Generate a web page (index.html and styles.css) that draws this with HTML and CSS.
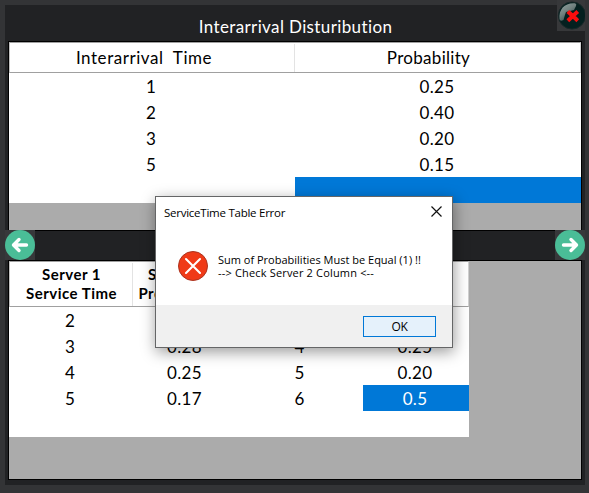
FILE: index.html
```html
<!DOCTYPE html>
<html lang="en">
<head>
<meta charset="utf-8">
<title>Interarrival Disturibution</title>
<link rel="stylesheet" href="styles.css">
</head>
<body>
<main class="panel">
  <h1 class="title"><span>Interarrival Disturibution</span></h1>
  <section class="grid arrivals">
    <div class="head"><span class="h-time">Interarrival&nbsp; Time</span></div><div class="head last"><span class="h-prob">Probability</span></div>
    <div class="cell">1</div><div class="cell">0.25</div>
    <div class="cell">2</div><div class="cell">0.40</div>
    <div class="cell">3</div><div class="cell">0.20</div>
    <div class="cell">5</div><div class="cell">0.15</div>
    <div class="cell"></div><div class="cell selected"></div>
  </section>
  <nav class="nav">
    <svg class="arrow" viewBox="0 0 30 30"><circle cx="15" cy="15" r="15" fill="#4abd97"/><path d="M8.500 15H21.500M14 9.500L8.500 15L14 20.500" fill="none" stroke="#fff" stroke-width="3.400" stroke-linecap="round" stroke-linejoin="round"/></svg>
    <svg class="arrow" viewBox="0 0 30 30"><circle cx="15" cy="15" r="15" fill="#4abd97"/><path d="M8.500 15H21.500M16 9.500L21.500 15L16 20.500" fill="none" stroke="#fff" stroke-width="3.400" stroke-linecap="round" stroke-linejoin="round"/></svg>
  </nav>
  <section class="service">
    <div class="grid servers">
      <div class="head"><span>Server 1<br>Service Time</span></div><div class="head h-second"><span>Server 1<br>Probability</span></div><div class="head"></div><div class="head last"></div>
      <div class="cell">2</div><div class="cell"></div><div class="cell"></div><div class="cell"></div>
      <div class="cell">3</div><div class="cell">0.28</div><div class="cell">4</div><div class="cell">0.25</div>
      <div class="cell">4</div><div class="cell">0.25</div><div class="cell">5</div><div class="cell">0.20</div>
      <div class="cell">5</div><div class="cell">0.17</div><div class="cell">6</div><div class="cell selected">0.5</div>
      <div class="cell"></div><div class="cell"></div><div class="cell"></div><div class="cell"></div>
    </div>
  </section>
</main>
<svg class="close" viewBox="0 0 28 31">
  <defs><linearGradient id="shine" x1="0" y1="0" x2=".7" y2="1"><stop offset="0" stop-color="#93a3a2"/><stop offset=".5" stop-color="#71817f"/><stop offset="1" stop-color="#2a4444"/></linearGradient></defs>
  <rect width="28" height="31" fill="#37383a"/>
  <circle cx="15" cy="15.500" r="13.600" fill="#04201f" stroke="#182829"/>
  <path d="M2.500 19C1.500 9 8 2.500 18 3.300Q20 4 19 6L17 10L9 12Q7.500 16 6.500 20Q3 22 2.500 19Z" fill="url(#shine)"/>
  <path d="M12.300 12.800L19.300 19.300M19.300 12.800L12.300 19.300" stroke="#fb0d0d" stroke-width="4" stroke-linecap="square"/>
</svg>
<div class="dialog" role="alertdialog">
  <header class="bar"><span class="caption">ServiceTime Table Error</span>
    <svg class="x" viewBox="0 0 11 11"><path d="M.5 .5L10.500 10.500M10.500 .5L.5 10.500" stroke="#111" stroke-width="1.200" fill="none"/></svg>
  </header>
  <div class="message">
    <svg class="error" viewBox="0 0 30 30"><circle cx="15" cy="15" r="14.500" fill="#f03a17" stroke="#aa3421"/><path d="M8 8L22 22M22 8L8 22" stroke="#fff" stroke-width="2.100" stroke-linecap="round"/></svg>
    <p><span class="line-a">Sum of Probabilities Must be Equal (1) !!</span><br><span class="line-b">--&gt; Check Server 2 Column &lt;--</span></p>
  </div>
  <footer class="foot"><button class="ok">OK</button></footer>
</div>
</body>
</html>
```

FILE: styles.css
```css
* { box-sizing: border-box; }
body { margin: 0; width: 589px; height: 493px; padding: 5px 4px 8px 5px; overflow: hidden; background: #333436; font-family: "Comic Sans MS", Lato, sans-serif; font-size: 17px; color: #000; }
.panel { width: 580px; height: 480px; background: #212224; }
.title { margin: 0; height: 36px; padding: 9px 0 0 1px; text-align: center; color: #fff; font-size: 17px; font-weight: 400; line-height: 26px; letter-spacing: .38px; }
.grid { display: grid; background: #fff; }
.arrivals { width: 574px; height: 190px; margin-left: 3px; border: 1px solid #000; grid-template: 31px repeat(5, 26px) / 286px 286px; background: #ababab; }
.head { display: flex; align-items: center; justify-content: center; text-align: center; background: #fff; border: solid #a0a0a0; border-width: 1px 0; position: relative; }
.head:first-child { border-left: 1px solid #c0c0c0; }
.head:not(.last)::after { content: ""; position: absolute; right: 0; top: 1px; bottom: 0; width: 1px; background: #e3e3e3; }
.head.last { border-right: 1px solid #d0d0d0; }
.cell { background: #fff; display: flex; align-items: center; justify-content: center; padding-top: 1px; letter-spacing: .3px; padding-right: 2px; }
.cell.selected { background: #0078d7; color: #fff; }
.h-time { letter-spacing: .55px; padding-right: 17px; }
.h-prob { letter-spacing: .3px; padding-right: 18px; }
.nav { height: 30px; margin-top: -1px; display: flex; justify-content: space-between; }
.arrow { width: 30px; height: 30px; background: #37383a; }
.service { width: 574px; height: 220px; margin-left: 3px; border: 1px solid #000; background: #ababab; }
.servers { width: 460px; grid-template: 46px repeat(5, 26px) / 124px 105px 125px 106px; }
.servers .head { font-size: 15px; font-weight: 700; line-height: 19px; letter-spacing: .5px; }
.servers .h-second { padding-right: 16px; }
.close { position: absolute; left: 557px; top: 0; width: 28px; height: 31px; }
.dialog { position: absolute; left: 155px; top: 196px; width: 298px; height: 152px; border: 1px solid #656667; background: #fff; box-shadow: 1px 4px 14px rgba(0,0,0,.4); font-family: "Segoe UI", "Open Sans", sans-serif; font-size: 12px; }
.bar { height: 30px; display: flex; justify-content: space-between; padding: 0 10px 0 8px; align-items: center; }
.x { width: 11px; height: 11px; margin-top: -2px; }
.caption { font-size: 11.5px; letter-spacing: -.25px; }
.message { height: 78px; display: flex; align-items: flex-start; padding: 24px 0 0 22px; gap: 10px; }
.error { width: 30px; height: 30px; }
.message p { margin: 0; line-height: 13px; font-size: 11px; padding-top: 2px; }
.line-b { letter-spacing: .17px; }
.foot { height: 42px; background: #f0f0f0; padding: 11px 0 0 207px; }
.ok { display: block; width: 73px; height: 21px; padding: 0; border: 1px solid #0078d7; background: #e5f1fb; font: 12px/18px "Segoe UI", "Open Sans", sans-serif; letter-spacing: -.4px; color: #000; }
```
